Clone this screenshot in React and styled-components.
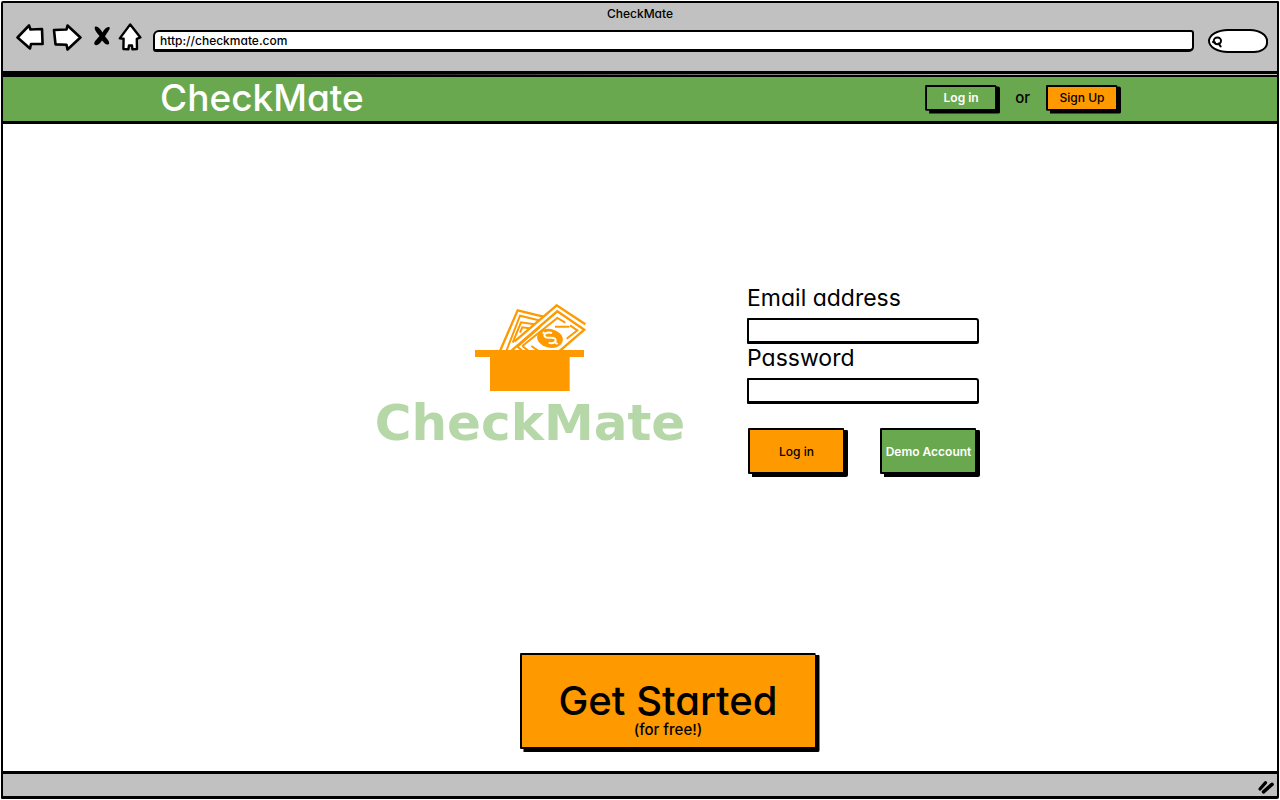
import React from "react";
import styled, { createGlobalStyle } from "styled-components";

const INK = "#000";
const CHROME = "#c1c1c1";
const GREEN = "#6aa84f";
const ORANGE = "#ff9900";
const MINT = "#b6d7a8";

const GlobalStyle = createGlobalStyle`
  *, *::before, *::after { box-sizing: border-box; }
  body {
    margin: 0;
    background: #fff;
    color: ${INK};
    font-family: Inter, "Open Sans", sans-serif;
    font-feature-settings: "cv11";
    font-weight: 500;
  }
  button, input { font: inherit; font-feature-settings: inherit; color: inherit; }
`;

const Outer = styled.div`
  display: flex;
  min-height: 100vh;
  padding: 1px;
`;

const Frame = styled.div`
  flex: 1;
  min-width: 0;
  display: flex;
  flex-direction: column;
  border: 2px solid ${INK};
  border-bottom-width: 3px;
  border-radius: 2px 1px 2px 1px;
`;

const Chrome = styled.header`
  height: 71px;
  background: ${CHROME};
  border-bottom: 3px solid ${INK};
`;

const WindowTitle = styled.div`
  padding-top: 2px;
  font-size: 12px;
  line-height: 17px;
  text-align: center;
`;

const Toolbar = styled.div`
  display: flex;
  align-items: flex-start;
  padding: 0 9px 0 13px;
`;

const Tools = styled.div`
  display: flex;
  gap: 8px;
`;

const Tool = styled.button`
  display: block;
  padding: 0;
  border: 0;
  background: none;
  cursor: pointer;
  svg { display: block; }
`;

const AddressGroup = styled.div`
  flex: 1;
  min-width: 0;
  display: flex;
  align-items: center;
  gap: 14px;
  padding: 7px 0 0 11px;
`;

const Address = styled.input`
  flex: 1;
  min-width: 0;
  height: 22px;
  padding: 0 5px;
  border: 2px solid ${INK};
  border-bottom-width: 3px;
  border-radius: 6px 3px 5px 3px;
  background: #fff;
  font-size: 12px;
`;

const SearchPill = styled.label`
  display: flex;
  align-items: center;
  width: 60px;
  height: 24px;
  padding-left: 2px;
  border: 2px solid ${INK};
  border-radius: 20px 18px 14px 20px / 12px 12px 10px 12px;
  background: #fff;
  svg { flex: none; }
`;

const SearchInput = styled.input`
  width: 36px;
  padding: 0;
  border: 0;
  background: none;
  outline: 0;
  font-size: 12px;
`;

const SeamLine = styled.div`
  height: 1px;
  background: linear-gradient(to right, ${INK} 20%, ${CHROME} 80%);
`;

const SiteBar = styled.nav`
  background: ${GREEN};
  border-top: 2px solid ${INK};
  border-bottom: 3px solid ${INK};
`;

const SiteBarInner = styled.div`
  display: flex;
  align-items: center;
  justify-content: space-between;
  max-width: 960px;
  height: 44px;
  margin: 0 auto;
  padding-bottom: 3px;
`;

const Brand = styled.a`
  color: #fff;
  font-size: 37px;
  line-height: 40px;
  text-decoration: none;
`;

const Account = styled.div`
  display: flex;
  align-items: center;
  gap: 16px;
  font-size: 15px;
`;

const SketchButton = styled.button`
  padding: 0;
  border: 2px solid ${INK};
  border-radius: 1px 2px 1px 1px;
  background: ${(p) => (p.$tone === "green" ? GREEN : ORANGE)};
  color: ${(p) => (p.$tone === "green" ? "#fff" : INK)};
  box-shadow: 2px 2px 0 1px ${INK};
  clip-path: polygon(0 0, calc(100% - 1px) 0, calc(100% - 1px) 2px, calc(100% + 3px) 2px, calc(100% + 3px) calc(100% + 3px), 4px calc(100% + 3px), 4px 100%, 0 100%);
  font-size: 12px;
  font-weight: ${(p) => (p.$tone === "green" ? 600 : 500)};
  white-space: nowrap;
  cursor: pointer;
`;

const BarButton = styled(SketchButton)`
  width: 72px;
  height: 26px;
  margin-right: 2px;
`;

const FormButton = styled(SketchButton)`
  width: 97px;
  height: 46px;
`;

const Main = styled.main`
  flex: 1;
  display: flex;
  flex-direction: column;
  align-items: center;
  justify-content: space-between;
  gap: 40px;
  padding: 160px 0 22px 56px;
  background: #fff;
`;

const Hero = styled.section`
  display: flex;
  align-items: flex-start;
  gap: 44px;
`;

const Logo = styled.div`
  display: flex;
  flex-direction: column;
  align-items: center;
  width: 346px;
  padding-top: 20px;
  svg { display: block; }
`;

const LogoText = styled.div`
  margin-top: 4px;
  color: ${MINT};
  font-family: "DejaVu Sans", Inter, sans-serif;
  font-size: 50px;
  font-weight: 700;
  line-height: 56px;
`;

const LoginForm = styled.form`
  width: 232px;
`;

const Label = styled.label`
  display: block;
  height: 34px;
  font-size: 23px;
  font-weight: 400;
  line-height: 28px;
  white-space: nowrap;
`;

const Field = styled.input`
  display: block;
  width: 100%;
  height: 26px;
  padding: 0 6px;
  border: 2px solid ${INK};
  border-bottom-width: 3px;
  border-radius: 1px 3px 2px 1px;
  background: #fff;
  font-size: 13px;
`;

const FormActions = styled.div`
  display: flex;
  justify-content: space-between;
  padding: 24px 2px 0 1px;
`;

const StartButton = styled(SketchButton)`
  display: flex;
  flex-direction: column;
  align-items: center;
  justify-content: flex-end;
  width: 297px;
  height: 96px;
  padding-bottom: 8px;
`;

const StartTitle = styled.span`
  font-size: 40px;
  line-height: 40px;
`;

const StartNote = styled.span`
  font-size: 15px;
  line-height: 18px;
`;

const StatusBar = styled.footer`
  display: flex;
  align-items: center;
  justify-content: flex-end;
  height: 25px;
  padding: 4px 2px 0 0;
  background: ${CHROME};
  border-top: 3px solid ${INK};
`;

const outline = {
  fill: "#fff",
  stroke: INK,
  strokeWidth: 2.6,
  strokeLinejoin: "round",
  strokeLinecap: "round",
};

const BackIcon = () => (
  <svg width="28" height="30" viewBox="0 0 28 30" aria-hidden="true">
    <path {...outline} d="M1.5 15.5 L13 3.5 L14.5 7.5 L26 7 L26.6 22 L15 22 L14 26.5 Z" />
  </svg>
);

const ForwardIcon = () => (
  <svg width="30" height="30" viewBox="0 0 30 30" aria-hidden="true">
    <path {...outline} d="M2 8 L14.5 7.5 L15.5 3.5 L28.4 15.5 L15.5 27.5 L14.5 22.8 L3.5 22.4 Z" />
  </svg>
);

const StopIcon = () => (
  <svg width="20" height="30" viewBox="-2 0 20 30" aria-hidden="true">
    <path
      fill={INK}
      d="M3 4.8 C5 3.5 8 6 10.5 10.5 C12.5 6.5 15.5 4 17.5 5.2 C18.8 7 15 10.5 13 14.5 C15 17 18 19.5 17 22 C14.5 24 12 20.5 10 18.5 C8 21.5 5 24.5 2.6 22.5 C1 20.5 5 17 7.5 14 C5 10.5 1.6 7.5 3 4.8 Z"
    />
  </svg>
);

const HomeIcon = () => (
  <svg width="24" height="30" viewBox="0 0 24 30" aria-hidden="true">
    <path
      {...outline}
      strokeWidth="2.4"
      d="M12.2 2.4 L22.4 15.4 L18.8 16.8 L19 27 L14.4 27.4 L14 23.5 L11 23.5 L10.4 27.4 L5.4 27 L5.6 16.8 L1.8 16.4 Z"
    />
  </svg>
);

const SearchIcon = () => (
  <svg width="12" height="14" viewBox="0 0 12 14" aria-hidden="true">
    <g fill="none" stroke={INK} strokeWidth="2" strokeLinecap="round">
      <ellipse cx="5.4" cy="6.8" rx="3.6" ry="3.4" />
      <path d="M1 8 L3 8.4 M6.6 9.6 L8.6 12.4" />
    </g>
  </svg>
);

const ResizeIcon = () => (
  <svg width="18" height="16" viewBox="0 0 18 16" aria-hidden="true">
    <g stroke={INK} strokeLinecap="round" fill="none">
      <path strokeWidth="3.2" d="M3 10 L8.6 3.6" />
      <path strokeWidth="3.6" d="M6.5 12.8 L15 5.4" />
    </g>
  </svg>
);

const HatLogo = () => (
  <svg width="111" height="87" viewBox="45 42 333 261" role="img" aria-label="Banknotes in a hat">
    <defs>
      <clipPath id="above-brim">
        <rect x="45" y="40" width="333" height="141" />
      </clipPath>
    </defs>
    <g clipPath="url(#above-brim)" fill="none" stroke={ORANGE} strokeWidth="6">
      <path strokeWidth="7" d="M120 183 L173 61 L250 80" />
      <path d="M139 183 L180 77 L236 91" />
      <path d="M158 158 L183 97 L222 103" />
      <path d="M180 128 L187 112 L208 115" />
      <path fill="#fff" stroke="none" d="M150 190 L165 150 L290 47 L378 103 V117 L298 190 Z" />
      <path strokeWidth="7" d="M163 155 L290 46 L376 103" />
      <path strokeWidth="7" d="M152 184 L292 64 L373 119 L299 183" />
      <path d="M172 170 L240 111 M187 168 L292 84 L316 98" />
      <path d="M285 110 H328 M330 106 L352 121 L320 146" />
      <path d="M170 168 L188 183 M187 168 L206 183 M214 168 L236 183" />
    </g>
    <ellipse cx="270" cy="145" rx="39" ry="28" fill={ORANGE} transform="rotate(12 270 145)" />
    <path
      d="M248 127 L258 132 M293 162 L284 157 M276 129 C262 124 250 131 254 139 C259 149 277 138 285 146 C292 154 280 164 266 158"
      fill="none"
      stroke="#fff"
      strokeWidth="6"
    />
    <path fill={ORANGE} d="M45 180 H372 V201 H329 V303 H90 V201 H45 Z" />
  </svg>
);

export default function App() {
  return (
    <>
      <GlobalStyle />
      <Outer>
        <Frame>
          <Chrome>
            <WindowTitle>CheckMate</WindowTitle>
            <Toolbar>
              <Tools>
                <Tool type="button" aria-label="Back"><BackIcon /></Tool>
                <Tool type="button" aria-label="Forward"><ForwardIcon /></Tool>
                <Tool type="button" aria-label="Stop"><StopIcon /></Tool>
                <Tool type="button" aria-label="Home"><HomeIcon /></Tool>
              </Tools>
              <AddressGroup>
                <Address type="text" aria-label="Address" defaultValue="http://checkmate.com" />
                <SearchPill>
                  <SearchIcon />
                  <SearchInput type="text" aria-label="Search" />
                </SearchPill>
              </AddressGroup>
            </Toolbar>
          </Chrome>
          <SeamLine />
          <SiteBar>
            <SiteBarInner>
              <Brand href="#">CheckMate</Brand>
              <Account>
                <BarButton type="button" $tone="green">Log in</BarButton>
                <span>or</span>
                <BarButton type="button" $tone="orange">Sign Up</BarButton>
              </Account>
            </SiteBarInner>
          </SiteBar>
          <Main>
            <Hero>
              <Logo>
                <HatLogo />
                <LogoText>CheckMate</LogoText>
              </Logo>
              <LoginForm onSubmit={(e) => e.preventDefault()}>
                <Label htmlFor="email">Email address</Label>
                <Field id="email" type="email" />
                <Label htmlFor="password">Password</Label>
                <Field id="password" type="password" />
                <FormActions>
                  <FormButton type="submit" $tone="orange">Log in</FormButton>
                  <FormButton type="button" $tone="green">Demo Account</FormButton>
                </FormActions>
              </LoginForm>
            </Hero>
            <StartButton type="button" $tone="orange">
              <StartTitle>Get Started</StartTitle>
              <StartNote>(for free!)</StartNote>
            </StartButton>
          </Main>
          <StatusBar>
            <ResizeIcon />
          </StatusBar>
        </Frame>
      </Outer>
    </>
  );
}
